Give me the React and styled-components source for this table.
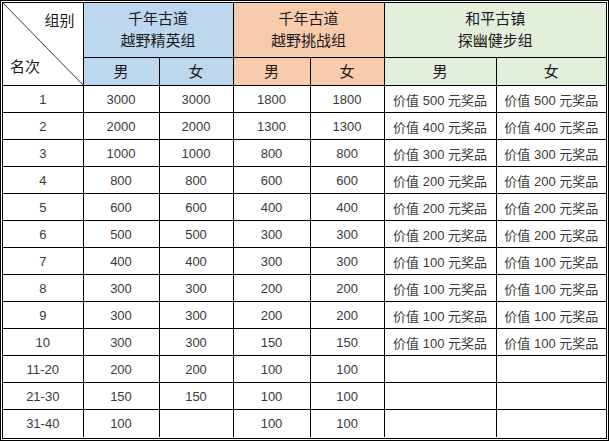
import styled, { createGlobalStyle } from 'styled-components';

const GlobalStyle = createGlobalStyle`
    html, body {
        margin: 0;
        padding: 0;
        background: #fff;
    }
    body {
        font-family: "Liberation Sans", "Noto Sans CJK SC", sans-serif;
    }
`

const tones = {
    blue: '#bdd7ee',
    orange: '#f8cbad',
    green: '#e2efda',
}

const Frame = styled.div`
    width: 609px;
    height: 441px;
    box-sizing: border-box;
    border: 3px double #000;
    overflow: hidden;
`

const Table = styled.table`
    width: 603px;
    table-layout: fixed;
    border-collapse: collapse;
    border-style: hidden;
`

const HeadCell = styled.th`
    background: ${({$tone}) => tones[$tone]};
    border: 1px solid #000;
    padding: 0;
    font-weight: normal;
    font-size: 15px;
    line-height: 22px;
    color: #1a1a1a;
    text-align: center;
    vertical-align: middle;
    height: ${({$tall}) => $tall ? '54px' : '27px'};
`

const CornerCell = styled.th`
    border: 1px solid #000;
    padding: 0;
    font-weight: normal;
    background: linear-gradient(
        to top right,
        transparent calc(50% - 0.8px),
        #4a4a4a 50%,
        transparent calc(50% + 0.8px)
    );
`

const CornerInner = styled.div`
    height: 82px;
    display: flex;
    flex-direction: column;
    justify-content: space-between;
    padding: 8px 8px 8px 7px;
    box-sizing: border-box;
    font-size: 15px;
    line-height: 20px;
    color: #1a1a1a;
`

const CornerLabel = styled.span`
    align-self: ${({$end}) => $end ? 'flex-end' : 'flex-start'};
`

const Row = styled.tr`
    height: 27px;
`

const Cell = styled.td`
    border: 1px solid #000;
    padding: 0;
    font-size: 13px;
    color: #3a3a3a;
    text-align: center;
    vertical-align: middle;
    white-space: nowrap;
`

const rows = [
    ['1', 3000, 3000, 1800, 1800, 500, 500],
    ['2', 2000, 2000, 1300, 1300, 400, 400],
    ['3', 1000, 1000, 800, 800, 300, 300],
    ['4', 800, 800, 600, 600, 200, 200],
    ['5', 600, 600, 400, 400, 200, 200],
    ['6', 500, 500, 300, 300, 200, 200],
    ['7', 400, 400, 300, 300, 100, 100],
    ['8', 300, 300, 200, 200, 100, 100],
    ['9', 300, 300, 200, 200, 100, 100],
    ['10', 300, 300, 150, 150, 100, 100],
    ['11-20', 200, 200, 100, 100, null, null],
    ['21-30', 150, 150, 100, 100, null, null],
    ['31-40', 100, null, 100, 100, null, null],
]

const prize = (value) => value ? `价值 ${value} 元奖品` : ''

const App = () => {
    return (
        <>
            <GlobalStyle />
            <Frame>
                <Table>
                    <colgroup>
                        <col style={{width: 80}} />
                        <col style={{width: 76}} />
                        <col style={{width: 74}} />
                        <col style={{width: 77}} />
                        <col style={{width: 74}} />
                        <col style={{width: 112}} />
                        <col style={{width: 110}} />
                    </colgroup>
                    <thead>
                        <tr>
                            <CornerCell rowSpan={2}>
                                <CornerInner>
                                    <CornerLabel $end>组别</CornerLabel>
                                    <CornerLabel>名次</CornerLabel>
                                </CornerInner>
                            </CornerCell>
                            <HeadCell $tone='blue' $tall colSpan={2}>千年古道<br />越野精英组</HeadCell>
                            <HeadCell $tone='orange' $tall colSpan={2}>千年古道<br />越野挑战组</HeadCell>
                            <HeadCell $tone='green' $tall colSpan={2}>和平古镇<br />探幽健步组</HeadCell>
                        </tr>
                        <tr>
                            <HeadCell $tone='blue'>男</HeadCell>
                            <HeadCell $tone='blue'>女</HeadCell>
                            <HeadCell $tone='orange'>男</HeadCell>
                            <HeadCell $tone='orange'>女</HeadCell>
                            <HeadCell $tone='green'>男</HeadCell>
                            <HeadCell $tone='green'>女</HeadCell>
                        </tr>
                    </thead>
                    <tbody>
                        {rows.map((row) => (
                            <Row key={row[0]}>
                                <Cell>{row[0]}</Cell>
                                <Cell>{row[1]}</Cell>
                                <Cell>{row[2]}</Cell>
                                <Cell>{row[3]}</Cell>
                                <Cell>{row[4]}</Cell>
                                <Cell>{prize(row[5])}</Cell>
                                <Cell>{prize(row[6])}</Cell>
                            </Row>
                        ))}
                    </tbody>
                </Table>
            </Frame>
        </>
    );
}

export default App;
